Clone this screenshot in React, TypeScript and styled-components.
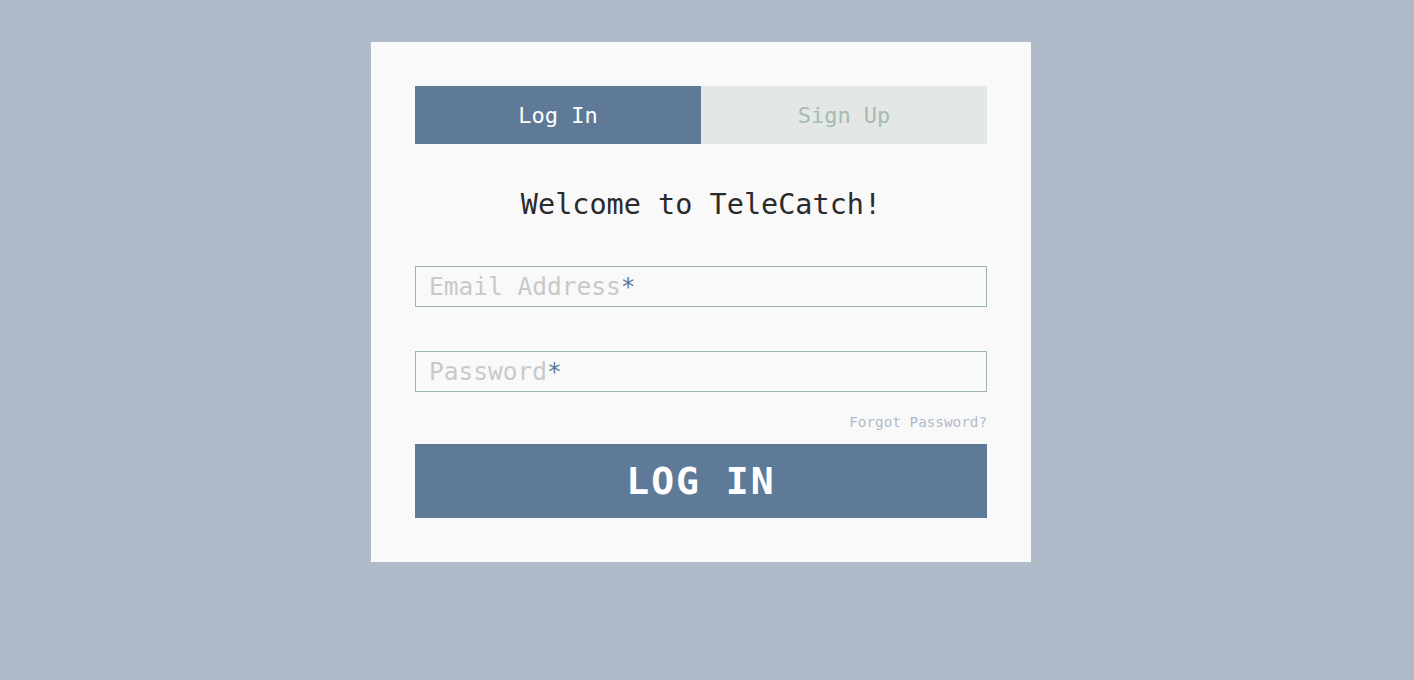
import React from "react";
import styled, { createGlobalStyle } from "styled-components";

const GlobalStyle = createGlobalStyle`
  html, body {
    margin: 0;
    padding: 0;
    background: #afbbc9;
    font-family: "DejaVu Sans Mono", "Liberation Mono", monospace;
  }
  * { box-sizing: border-box; }
`;

const Page = styled.div`
  min-height: 680px;
  display: flex;
  justify-content: center;
  align-items: flex-start;
  padding: 42px 12px 0 0;
`;

const Card = styled.div`
  width: 660px;
  background: #f9f9f9;
  padding: 44px;
  display: flex;
  flex-direction: column;
`;

const Tabs = styled.div`
  display: grid;
  grid-template-columns: 1fr 1fr;
  height: 58px;
`;

const Tab = styled.button<{ $active?: boolean }>`
  border: none;
  margin: 0;
  padding: 0;
  font-family: inherit;
  font-size: 22px;
  cursor: pointer;
  background: ${(p) => (p.$active ? "#5e7a97" : "#e3e7e6")};
  color: ${(p) => (p.$active ? "#ffffff" : "#a7bab4")};
`;

const Title = styled.h1`
  margin: 44px 0 0;
  font-size: 28.5px;
  font-weight: normal;
  line-height: 33px;
  text-align: center;
  color: #2b2b2b;
`;

const Field = styled.label<{ $top: number }>`
  position: relative;
  display: block;
  margin-top: ${(p) => p.$top}px;
  height: 41px;
`;

const Input = styled.input`
  width: 100%;
  height: 41px;
  border: 1px solid #9db4ad;
  background: transparent;
  font-family: inherit;
  font-size: 24.5px;
  padding: 0 13px;
  color: #2b2b2b;
  outline: none;
`;

const Placeholder = styled.span`
  position: absolute;
  left: 14px;
  top: 0;
  height: 41px;
  display: flex;
  align-items: center;
  font-size: 24.5px;
  color: #c9c9c9;
  pointer-events: none;
`;

const Required = styled.span`
  color: #5e7a97;
`;

const Forgot = styled.a`
  align-self: flex-end;
  margin-top: 22px;
  font-size: 14.3px;
  line-height: 16px;
  color: #afbbc9;
  text-decoration: none;
  cursor: pointer;
`;

const Submit = styled.button`
  margin-top: 14px;
  height: 74px;
  border: none;
  background: #5e7a97;
  color: #ffffff;
  font-family: inherit;
  font-size: 38px;
  font-weight: bold;
  letter-spacing: 2px;
  cursor: pointer;
`;

export default function App() {
  return (
    <>
      <GlobalStyle />
      <Page>
        <Card>
          <Tabs>
            <Tab $active>Log In</Tab>
            <Tab>Sign Up</Tab>
          </Tabs>
          <Title>Welcome to TeleCatch!</Title>
          <Field $top={45}>
            <Input type="email" />
            <Placeholder>
              Email Address<Required>*</Required>
            </Placeholder>
          </Field>
          <Field $top={44}>
            <Input type="password" />
            <Placeholder>
              Password<Required>*</Required>
            </Placeholder>
          </Field>
          <Forgot>Forgot Password?</Forgot>
          <Submit>LOG IN</Submit>
        </Card>
      </Page>
    </>
  );
}
